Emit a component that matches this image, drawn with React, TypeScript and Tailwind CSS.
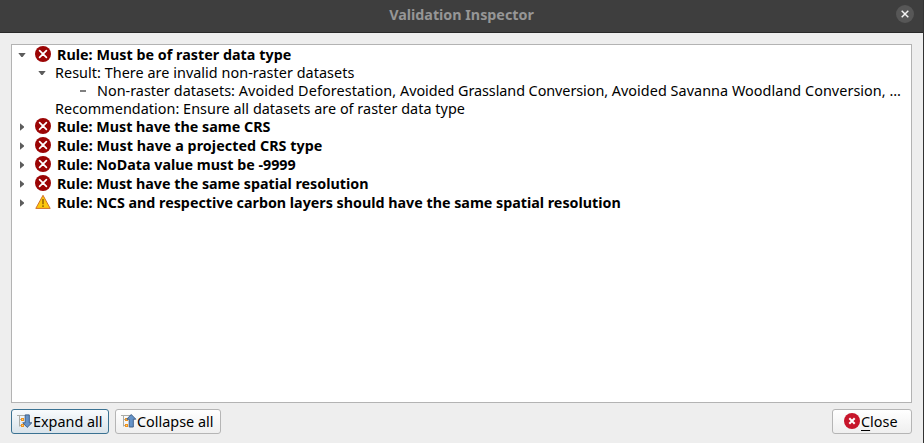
import type { ReactNode } from "react";

const ErrorIcon = () => (
  <svg width="16" height="16" viewBox="0 0 16 16" className="mb-px shrink-0">
    <circle cx="8" cy="8" r="8" fill="#9b0505" />
    <path d="M4.6 4.6 11.4 11.4M11.4 4.6 4.6 11.4" stroke="#fff" strokeWidth="1.7" strokeLinecap="round" />
  </svg>
);

const WarningIcon = () => (
  <svg width="16" height="16" viewBox="0 0 16 16" className="mb-px shrink-0">
    <path d="M8 1.3 15.2 14.4H.8Z" fill="#fdc80c" stroke="#d0702a" strokeWidth="1" strokeLinejoin="round" />
    <path d="M8 5V10.2M8 11.2V13" stroke="#7a4a00" strokeWidth="1.2" />
  </svg>
);

const Down = () => (
  <svg width="8" height="4" viewBox="0 0 8 4" className="shrink-0">
    <path d="M.3 0H7.7L4.6 4H3.4Z" fill="#5c5c5c" />
  </svg>
);

const Right = () => (
  <svg width="4" height="8" viewBox="0 0 4 8" className="shrink-0">
    <path d="M0 .3V7.7L4 4.6V3.4Z" fill="#5c5c5c" />
  </svg>
);

const TreeArrow = ({ up }: { up?: boolean }) => (
  <svg width="16" height="16" viewBox="0 0 16 16" className="shrink-0">
    <path d="M0 1.5H11M2.5 2V12.5M3 5.5H4M3 11.5H4" stroke="#aaaca8" strokeWidth="1" fill="none" />
    <rect x="4.5" y="4.5" width="2" height="2" fill="#fcd08a" stroke="#f0941c" />
    <rect x="4.5" y="10.5" width="2" height="2" fill="#fcd08a" stroke="#f0941c" />
    {up ? (
      <path d="M10.2.5 14.8 5.2H12.3V13H8.2V5.2H5.7Z" fill="#6593c8" stroke="#41618a" strokeLinejoin="round" />
    ) : (
      <path d="M8.2 .9H12.3V8.8H14.8L10.2 13.4 5.7 8.8H8.2Z" fill="#6593c8" stroke="#41618a" strokeLinejoin="round" />
    )}
  </svg>
);

const rules: { label: string; track: string; warning?: boolean }[] = [
  { label: "Rule: Must have the same CRS", track: "tracking-[0px]" },
  { label: "Rule: Must have a projected CRS type", track: "tracking-[0.055px]" },
  { label: "Rule: NoData value must be -9999", track: "tracking-[0px]" },
  { label: "Rule: Must have the same spatial resolution", track: "tracking-[-0.01px]" },
  { label: "Rule: NCS and respective carbon layers should have the same spatial resolution", track: "tracking-[-0.01px]", warning: true },
];

function Rule({ label, track, open, warning }: { label: string; track: string; open?: boolean; warning?: boolean }) {
  return (
    <div className="flex h-[19px] items-center whitespace-nowrap text-[14.3px] leading-[19px] font-bold">
      <span className="flex w-[23px] shrink-0 pl-[6px]">{open ? <Down /> : <span className="pl-[2px]"><Right /></span>}</span>
      {warning ? <WarningIcon /> : <ErrorIcon />}
      <span className={`ml-[6px] ${track}`}>{label}</span>
    </div>
  );
}

function Line({ indent, marker, track, children }: { indent: string; marker?: ReactNode; track: string; children: ReactNode }) {
  return (
    <div className="flex h-[18px] items-center whitespace-nowrap text-[14.4px] leading-[18px]">
      <span className={`flex shrink-0 ${indent}`}>{marker}</span>
      <span className={track}>{children}</span>
    </div>
  );
}

export default function App() {
  return (
    <div className="flex h-[443px] w-[924px] flex-col overflow-hidden border-r border-[#333] bg-[#eeeeee] font-['Noto_Sans','Open_Sans',sans-serif] text-black">
      <header className="grid h-[33px] shrink-0 grid-cols-[36px_1fr_36px] items-center border-b border-[#292929] bg-[#3e3e3e]">
        <span />
        <h1 className="pb-[2px] text-center text-[14.3px] leading-[20px] font-bold text-[#969696]">Validation Inspector</h1>
        <button aria-label="Close window" className="mb-[4px] ml-[9px] flex size-[18px] items-center justify-center rounded-full bg-[#575757]">
          <svg width="8" height="8" viewBox="0 0 8 8"><path d="M.7.7 7.3 7.3M7.3.7.7 7.3" stroke="#f4f4f4" strokeWidth="1.5" /></svg>
        </button>
      </header>
      <main className="flex flex-1 flex-col px-[11px] pt-[11px] pb-[9px]">
        <div className="h-[359px] w-[901px] border border-[#b3b3b3] bg-white">
          <Rule label="Rule: Must be of raster data type" track="tracking-[0.03px]" open />
          <Line indent="w-[43px] pl-[26px]" marker={<Down />} track="tracking-[0.04px]">Result: There are invalid non-raster datasets</Line>
          <Line indent="w-[85px] pl-[68px]" marker={<span className="h-[2px] w-[6px] bg-[#808080]" />} track="tracking-[0px]">
            Non-raster datasets: <span className="tracking-[0.11px]">Avoided Deforestation, </span>
            <span className="tracking-[-0.065px]">Avoided Grassland Conversion, </span>
            <span className="tracking-[0.05px]">Avoided Savanna Woodland Conversion, …</span>
          </Line>
          <Line indent="w-[43px]" track="tracking-[0.03px]">Recommendation: Ensure all datasets are of raster data type</Line>
          <div className="-mt-px">
            {rules.map((r) => <Rule key={r.label} {...r} />)}
          </div>
        </div>
        <footer className="mt-[6px] flex h-[25px] w-[901px] text-[14.4px] leading-[20px]">
          <button className="flex w-[98px] items-center rounded-[3px] border border-[#3b7292] bg-linear-to-b from-[#f8fbfd] to-[#d9e3ea] pl-[5px] whitespace-nowrap"><TreeArrow /><span>Expand all</span></button>
          <button className="ml-[6px] flex w-[106px] items-center rounded-[3px] border border-[#b5b5b5] bg-linear-to-b from-white to-[#efefef] pl-[5px] whitespace-nowrap"><TreeArrow up /><span>Collapse all</span></button>
          <button className="ml-auto flex w-[80px] items-center rounded-[3px] border border-[#b5b5b5] bg-linear-to-b from-white to-[#efefef] pl-[11px] whitespace-nowrap">
            <svg width="16" height="16" viewBox="0 0 16 16" className="mb-px shrink-0"><circle cx="8" cy="8" r="8" fill="#c7162b" /><path d="M5.3 5.3 10.7 10.7M10.7 5.3 5.3 10.7" stroke="#fff" strokeWidth="2" /></svg>
            <span className="ml-[1px]"><span className="underline decoration-1 underline-offset-[3px]">C</span>lose</span>
          </button>
        </footer>
      </main>
    </div>
  );
}
